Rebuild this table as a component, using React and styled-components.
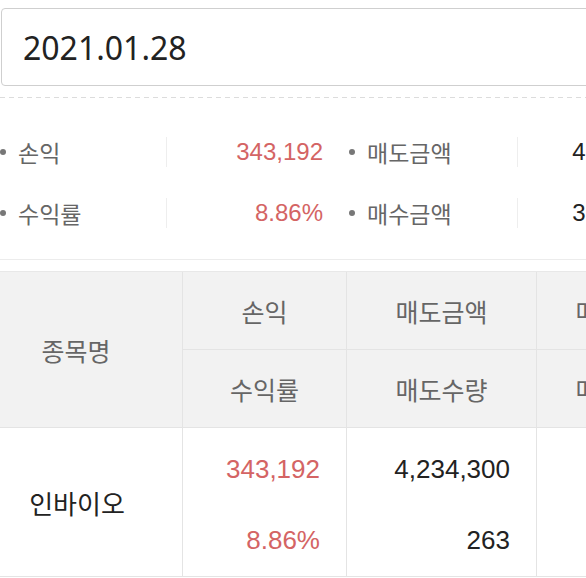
import React from 'react'
import styled, { createGlobalStyle } from 'styled-components'

const GlobalStyle = createGlobalStyle`
  html, body {
    margin: 0;
    padding: 0;
    background: #fff;
    overflow: hidden;
  }
  body {
    font-family: "Noto Sans CJK KR", "Noto Sans", sans-serif;
  }
`

const summary = [
  [
    { label: '손익', value: '343,192', red: true },
    { label: '매도금액', value: '4,234,300' },
  ],
  [
    { label: '수익률', value: '8.86%', red: true },
    { label: '매수금액', value: '3,891,108' },
  ],
]

export default function App() {
  return (
    <Page>
      <GlobalStyle />
      <DateBox>2021.01.28</DateBox>
      <Dashed />
      <Summary>
        {summary.map((row, i) => (
          <SummaryRow key={i}>
            {row.map((item) => (
              <React.Fragment key={item.label}>
                <Label>{item.label}</Label>
                <Value $red={item.red}>{item.value}</Value>
              </React.Fragment>
            ))}
          </SummaryRow>
        ))}
      </Summary>
      <Table>
        <HeadCell $rows={2} $first>종목명</HeadCell>
        <HeadCell>손익</HeadCell>
        <HeadCell>매도금액</HeadCell>
        <HeadCell>매수금액</HeadCell>
        <HeadCell>수익률</HeadCell>
        <HeadCell>매도수량</HeadCell>
        <HeadCell>매수수량</HeadCell>

        <NameCell>인바이오</NameCell>
        <NumCell>
          <Num $red>343,192</Num>
          <Num $red>8.86%</Num>
        </NumCell>
        <NumCell>
          <Num>4,234,300</Num>
          <Num>263</Num>
        </NumCell>
        <NumCell />
      </Table>
    </Page>
  )
}

const Page = styled.div`
  width: 720px;
  padding-top: 8px;
`

const DateBox = styled.div`
  box-sizing: border-box;
  margin-left: 1px;
  height: 78px;
  border: 1px solid #cfcfcf;
  border-radius: 4px;
  display: flex;
  align-items: center;
  padding-left: 21px;
  font-family: "Noto Sans", sans-serif;
  font-size: 32px;
  color: #222;
`

const Dashed = styled.div`
  margin-top: 11px;
  height: 1px;
  background-image: repeating-linear-gradient(to right, #dcdcdc 0 5px, transparent 5px 9px);
`

const Summary = styled.div`
  padding: 23px 0 16px;
  border-bottom: 1px solid #ececec;
`

const SummaryRow = styled.div`
  display: grid;
  grid-template-columns: 166px 183px 168px 188px;
  height: 61px;
  align-items: center;
`

const Label = styled.div`
  display: flex;
  align-items: center;
  font-family: "Noto Sans CJK KR", sans-serif;
  font-size: 23px;
  color: #666;
  &::before {
    content: '';
    width: 6px;
    height: 6px;
    border-radius: 50%;
    background: #777;
    margin-right: 12px;
  }
`

const Value = styled.div`
  height: 30px;
  line-height: 30px;
  border-left: 1px solid #eee;
  text-align: right;
  padding-right: 26px;
  font-family: "Liberation Sans", Arial, sans-serif;
  font-size: 24px;
  color: ${(p) => (p.$red ? '#d46464' : '#222')};
`

const Table = styled.div`
  margin-top: 11px;
  display: grid;
  grid-template-columns: 183px 164px 190px 170px;
  grid-template-rows: 78px 78px 149px;
  border-top: 1px solid #e8e8e8;
`

const HeadCell = styled.div`
  grid-row: ${(p) => (p.$rows ? `span ${p.$rows}` : 'auto')};
  background: #f2f2f2;
  border-right: 1px solid #e4e4e4;
  border-bottom: 1px solid #e4e4e4;
  display: flex;
  align-items: center;
  justify-content: center;
  padding-right: ${(p) => (p.$first ? '30px' : '0')};
  font-size: 25px;
  color: #666;
  white-space: nowrap;
`

const NameCell = styled.div`
  border-right: 1px solid #e4e4e4;
  border-bottom: 1px solid #e4e4e4;
  display: flex;
  align-items: center;
  justify-content: center;
  padding-right: 28px;
  font-size: 26px;
  color: #222;
`

const NumCell = styled.div`
  border-right: 1px solid #e4e4e4;
  border-bottom: 1px solid #e4e4e4;
  display: flex;
  flex-direction: column;
  justify-content: space-around;
  align-items: flex-end;
  padding: 6px 26px 0 0;
`

const Num = styled.div`
  font-family: "Liberation Sans", Arial, sans-serif;
  font-size: 26px;
  color: ${(p) => (p.$red ? '#d46464' : '#222')};
`
